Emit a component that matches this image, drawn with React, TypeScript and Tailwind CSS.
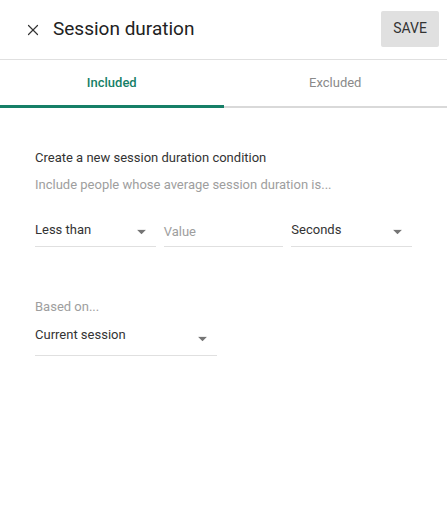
import { X } from "lucide-react"

export default function App() {
  return (
    <div className="w-[447px] h-[526px] bg-white text-[#212121]" style={{ fontFamily: "Roboto, 'Liberation Sans', sans-serif" }}>
      <header className="h-[60px] flex items-center pl-[24px] pr-[8px] border-b border-[#e0e0e0]">
        <X className="w-[18px] h-[18px] text-[#333]" strokeWidth={1.6} />
        <h1 className="ml-[11px] text-[19px] leading-none text-[#222] flex-1 -mt-[3px]">Session duration</h1>
        <button className="w-[58px] h-[36px] rounded-[2px] bg-[#e0e0e0] text-[14px] text-[#333] -mt-[2px]">SAVE</button>
      </header>

      <div className="flex h-[48px]">
        <Tab label="Included" active />
        <Tab label="Excluded" />
      </div>

      <div className="px-[35px] pt-[42px]">
        <p className="text-[13px] leading-[16px] text-[#333]">Create a new session duration condition</p>
        <p className="mt-[11px] text-[13px] leading-[16px] text-[#9e9e9e]">Include people whose average session duration is...</p>

        <div className="flex gap-[8px] mt-[23px]">
          <Select label="Less than" className="w-[121px] h-[31px]" />
          <div className="w-[120px] h-[31px] border-b border-[#e0e0e0] pt-[8px] text-[13px] leading-[16px] text-[#9e9e9e]">Value</div>
          <Select label="Seconds" className="w-[121px] h-[31px]" />
        </div>

        <p className="mt-[52px] text-[13px] leading-[16px] text-[#9e9e9e]">Based on...</p>
        <Select label="Current session" className="w-[182px] h-[35px] mt-[6px]" />
      </div>
    </div>
  )
}

function Tab({ label, active }: { label: string; active?: boolean }) {
  return (
    <div
      className={`flex-1 flex items-center justify-center text-[13px] ${
        active ? "border-b-[3px] border-[#167f67] text-[#167f67] font-medium pt-[1px]" : "border-b-[2px] border-[#d9d9d9] text-[#8a8a8a] pb-[1px]"
      }`}
    >
      {label}
    </div>
  )
}

function Select({ label, className }: { label: string; className: string }) {
  return (
    <div className={`relative border-b border-[#e0e0e0] pt-[6px] ${className}`}>
      <span className="block text-[13px] leading-[16px] text-[#333]">{label}</span>
      <svg width="9" height="5" viewBox="0 0 10 5" className="absolute right-[10px] top-1/2 -translate-y-1/2 mt-[1px]">
        <path d="M0 0 L5 5 L10 0 Z" fill="#757575" />
      </svg>
    </div>
  )
}
